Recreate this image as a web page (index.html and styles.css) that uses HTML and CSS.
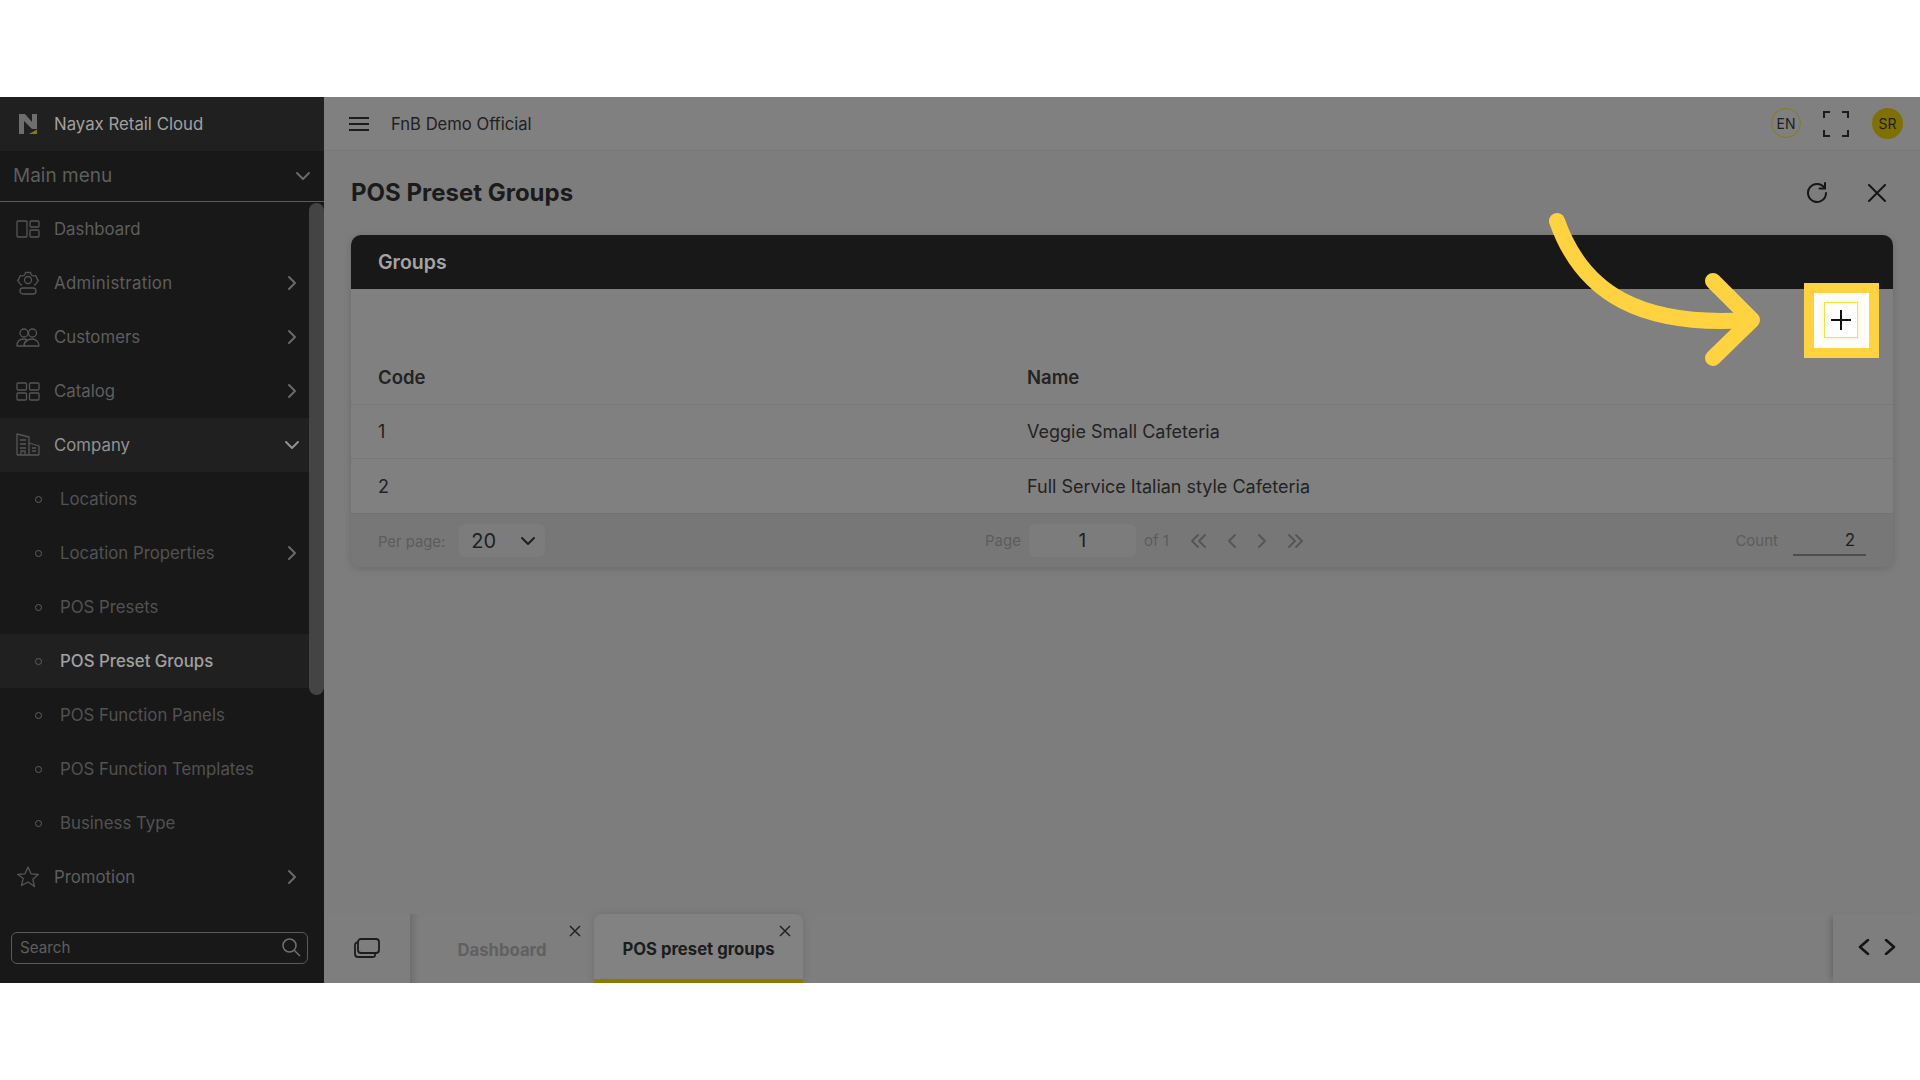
FILE: index.html
```html
<!DOCTYPE html>
<html lang="en">
<head>
<meta charset="utf-8">
<title>POS Preset Groups</title>
<link rel="stylesheet" href="styles.css">
</head>
<body>
<div class="app">
  <aside class="sidebar">
    <div class="brand">
      <svg class="logo" viewBox="0 0 20 22" width="20" height="22"><path d="M1 1h6l7 8V1h5v15h-5L6 8v13H1z" fill="#6e6e6e"/><path d="M11 21l8-4.500V21z" fill="#8a7a10"/></svg>
      <span>Nayax Retail Cloud</span>
    </div>
    <div class="mainmenu">
      <span>Main menu</span>
      <svg class="chev" viewBox="0 0 16 16" width="16" height="16"><path d="M2 5l6 6 6-6"/></svg>
    </div>
    <nav class="nav">
      <a class="item"><span class="ic"><svg viewBox="0 0 24 24" width="24" height="24"><rect x="1" y="4" width="10" height="16" rx="1"/><rect x="14" y="4" width="9" height="6" rx="1"/><rect x="14" y="13" width="9" height="7" rx="1"/></svg></span><span class="lbl">Dashboard</span></a>
      <a class="item"><span class="ic"><svg viewBox="0 0 24 24" width="24" height="24"><circle cx="12" cy="9" r="3.500"/><path d="M6 14C3 14 4 11 1.500 9.500 4 8 3 5 5 4.500c2 1 4 0 4.500-3h5c.5 3 2.500 4 4.500 3 2 .5 1 3.500 3.500 5C20 11 21 14 18 14"/><rect x="4" y="17" width="16" height="6" rx="3"/></svg></span><span class="lbl wide">Administration</span><svg class="chev r" viewBox="0 0 16 16" width="16" height="16"><path d="M5 2l6 6-6 6"/></svg></a>
      <a class="item"><span class="ic"><svg viewBox="0 0 24 24" width="24" height="24"><circle cx="8" cy="8" r="4"/><circle cx="16.500" cy="8" r="4"/><path d="M1 21c0-5 3-7 7-7 2 0 3 .5 3 1-2 1-3 3-3 6z"/><path d="M8 21c0-4 4-7 8-7s7 3 7 7z"/></svg></span><span class="lbl">Customers</span><svg class="chev r" viewBox="0 0 16 16" width="16" height="16"><path d="M5 2l6 6-6 6"/></svg></a>
      <a class="item"><span class="ic"><svg viewBox="0 0 24 24" width="24" height="24"><rect x="1" y="4" width="9.500" height="7" rx="1"/><rect x="13.500" y="4" width="9.500" height="7" rx="1"/><rect x="1" y="14" width="9.500" height="7" rx="1"/><rect x="13.500" y="14" width="9.500" height="7" rx="1"/></svg></span><span class="lbl">Catalog</span><svg class="chev r" viewBox="0 0 16 16" width="16" height="16"><path d="M5 2l6 6-6 6"/></svg></a>
      <a class="item open"><span class="ic"><svg viewBox="0 0 24 24" width="24" height="24"><path d="M1 22V1l12 3v18M13 10l10 3v9M1 22h22M4 7h6M4 11h6M4 15h6M5 22v-4h4v4M16 15h4M16 18h4"/></svg></span><span class="lbl">Company</span><svg class="chev r" viewBox="0 0 16 16" width="16" height="16"><path d="M2 5l6 6 6-6"/></svg></a>
      <a class="item sub"><span class="dot"></span><span class="lbl">Locations</span></a>
      <a class="item sub"><span class="dot"></span><span class="lbl">Location Properties</span><svg class="chev r" viewBox="0 0 16 16" width="16" height="16"><path d="M5 2l6 6-6 6"/></svg></a>
      <a class="item sub"><span class="dot"></span><span class="lbl">POS Presets</span></a>
      <a class="item sub active"><span class="dot"></span><span class="lbl">POS Preset Groups</span></a>
      <a class="item sub"><span class="dot"></span><span class="lbl">POS Function Panels</span></a>
      <a class="item sub"><span class="dot"></span><span class="lbl">POS Function Templates</span></a>
      <a class="item sub"><span class="dot"></span><span class="lbl">Business Type</span></a>
      <a class="item"><span class="ic"><svg viewBox="0 0 24 24" width="24" height="24"><path d="M12 2l3 6.800 7.300.7-5.500 4.800 1.700 7.200L12 17l-6.500 3.500 1.700-7.200L1.700 9.500 9 8.800z"/></svg></span><span class="lbl">Promotion</span><svg class="chev r" viewBox="0 0 16 16" width="16" height="16"><path d="M5 2l6 6-6 6"/></svg></a>
    </nav>
    <div class="search">
      <span>Search</span>
      <svg viewBox="0 0 20 20" width="20" height="20"><circle cx="8.500" cy="8.500" r="6.500"/><path d="M13.500 13.500L19 19"/></svg>
    </div>
    <div class="scrollthumb"></div>
  </aside>

  <div class="main">
    <header class="topbar">
      <svg class="burger" viewBox="0 0 20 14" width="20" height="14"><path d="M0 1h20M0 7h20M0 13h20"/></svg>
      <span class="org">FnB Demo Official</span>
      <div class="topright">
        <span class="lang">EN</span>
        <svg class="full" viewBox="0 0 26 26" width="26" height="26"><path d="M1 7V1h6M19 1h6v6M25 19v6h-6M7 25H1v-6"/></svg>
        <span class="avatar">SR</span>
      </div>
    </header>

    <section class="content">
      <div class="titlerow">
        <h1>POS Preset Groups</h1>
        <div class="titleicons">
          <svg viewBox="0 0 22 22" width="22" height="22"><path d="M18.500 6A9 9 0 1 0 20 11"/><path d="M19 1v5.500h-5.500"/></svg>
          <svg viewBox="0 0 18 18" width="18" height="18"><path d="M1 1l16 16M17 1L1 17"/></svg>
        </div>
      </div>
      <div class="card">
        <div class="cardhead">Groups</div>
        <div class="toolbar"></div>
        <div class="row thead"><div class="c1">Code</div><div>Name</div></div>
        <div class="row"><div class="c1">1</div><div>Veggie Small Cafeteria</div></div>
        <div class="row last"><div class="c1">2</div><div>Full Service Italian style Cafeteria</div></div>
        <div class="cardfoot">
          <div class="perpage">
            <span class="muted">Per page:</span>
            <span class="select"><span>20</span><svg viewBox="0 0 14 14" width="14" height="14"><path d="M1 4l6 6 6-6"/></svg></span>
          </div>
          <div class="pager">
            <span class="muted">Page</span>
            <span class="pageinput">1</span>
            <span class="muted">of 1</span>
            <span class="pagebtns">
              <svg viewBox="0 0 16 14" width="16" height="14"><path d="M7 1L1 7l6 6M14 1L8 7l6 6"/></svg>
              <svg viewBox="0 0 10 14" width="10" height="14"><path d="M8 1L2 7l6 6"/></svg>
              <svg viewBox="0 0 10 14" width="10" height="14"><path d="M2 1l6 6-6 6"/></svg>
              <svg viewBox="0 0 16 14" width="16" height="14"><path d="M2 1l6 6-6 6M9 1l6 6-6 6"/></svg>
            </span>
          </div>
          <div class="count">
            <span class="muted">Count</span>
            <span class="countval">2</span>
          </div>
        </div>
      </div>
    </section>

    <footer class="tabbar">
      <div class="tabicon"><svg viewBox="0 0 26 20" width="26" height="20"><rect x="4" y="1" width="21" height="14" rx="3"/><path d="M4 4.500H3.500A2.500 2.500 0 0 0 1 7v9a3 3 0 0 0 3 3h15a3 3 0 0 0 2-1v-3"/></svg></div>
      <div class="tab">Dashboard<svg class="tabx" viewBox="0 0 12 12" width="12" height="12"><path d="M1 1l10 10M11 1L1 11"/></svg></div>
      <div class="tab current">POS preset groups<svg class="tabx" viewBox="0 0 12 12" width="12" height="12"><path d="M1 1l10 10M11 1L1 11"/></svg></div>
      <div class="tabnav">
        <svg viewBox="0 0 12 16" width="12" height="16"><path d="M10 1L2 8l8 7"/></svg>
        <svg viewBox="0 0 12 16" width="12" height="16"><path d="M2 1l8 7-8 7"/></svg>
      </div>
    </footer>
  </div>

  <svg class="arrow" viewBox="0 0 220 170" width="220" height="170"><path d="M14 16C40 90 100 122 205 115"/><path d="M170 76l39 39-39 38"/></svg>
  <div class="highlight"><span class="plusbtn"><svg viewBox="0 0 20 20" width="20" height="20"><path d="M10 0v20M0 10h20"/></svg></span></div>
</div>
</body>
</html>
```

FILE: styles.css
```css
* { box-sizing: border-box; }
html, body { margin: 0; height: 100%; background: #fff; }
body { padding-top: 97px; font-family: "Inter", "Roboto", sans-serif; }
svg { fill: none; stroke: currentColor; display: block; flex: none; }

.app { position: relative; display: flex; height: 886px; width: 1920px; overflow: hidden; }

.sidebar { position: relative; width: 324px; flex: none; display: flex; flex-direction: column; background: #181818; color: #5e5e5e; font-size: 16.800px; }
.brand { height: 54px; display: flex; align-items: center; gap: 16px; padding-left: 18px; background: #202020; color: #a0a0a0; font-size: 16.800px; }
.logo { stroke: none; }
.mainmenu { height: 51px; display: flex; align-items: center; justify-content: space-between; padding: 0 13px 1px; border-bottom: 1px solid #5a5a5a; font-size: 19px; color: #5e5e5e; }
.chev { stroke-width: 2; stroke-linecap: round; stroke-linejoin: round; color: #6a6a6a; }

.nav { display: flex; flex-direction: column; }
.item { height: 54px; display: flex; align-items: center; padding-left: 16px; }
.ic { width: 24px; height: 24px; margin-right: 14px; color: #555; }
.ic svg { stroke-width: 1.300; stroke-linejoin: round; }
.lbl { flex: 1; }
.lbl.wide { letter-spacing: .3px; }
.chev.r { margin-right: 24px; }
.item.open { background: #202020; color: #929292; }
.item.open .chev { color: #929292; }
.sub { padding-left: 35px; }
.dot { width: 7px; height: 7px; border: 1.500px solid #5e5e5e; border-radius: 50%; margin-right: 18px; flex: none; }
.sub .lbl { color: #525252; }
.active { background: #202020; }
.sub.active .lbl { color: #a0a0a0; font-weight: 500; }

.search { margin: auto 16px 19px 11px; height: 32px; display: flex; align-items: center; justify-content: space-between; padding: 0 6px 2px 8px; border: 1px solid #5a5a5a; border-radius: 6px; font-size: 15.200px; color: #5e5e5e; }
.search svg { stroke-width: 1.500; color: #707070; }
.scrollthumb { position: absolute; right: 0; top: 106px; width: 15px; height: 492px; background: #444; border-radius: 8px; }

.main { flex: 1; min-width: 0; display: flex; flex-direction: column; background: #7d7d7d; color: #1b1b1b; }
.topbar { height: 54px; flex: none; display: flex; align-items: center; padding: 0 17px 0 25px; background: #808080; border-bottom: 1px solid #787878; }
.burger { stroke-width: 2; color: #1c1c1c; }
.org { margin-left: 22px; font-size: 16.600px; color: #202020; }
.topright { margin-left: auto; display: flex; align-items: center; }
.lang { width: 30px; height: 30px; border: 1px solid #8a7a10; border-radius: 50%; display: flex; align-items: center; justify-content: center; font-size: 14px; color: #1f1f1f; margin-bottom: 1px; }
.full { margin: 0 23px 0 22px; stroke-width: 2; color: #1c1c1c; }
.avatar { width: 31px; height: 31px; background: #807000; border-radius: 50%; display: flex; align-items: center; justify-content: center; font-size: 14px; color: #1f1f1f; margin-bottom: 1px; }

.content { flex: 1; padding: 0 27px; }
.titlerow { height: 84px; display: flex; align-items: center; justify-content: space-between; }
h1 { margin: 0 0 1px; font-size: 24px; font-weight: 700; color: #1b1b1b; }
.titleicons { display: flex; align-items: center; gap: 40px; padding-right: 7px; }
.titleicons svg { stroke-width: 2; stroke-linecap: round; color: #161616; }

.card { background: #808080; border-radius: 10px; box-shadow: 0 2px 8px rgba(0,0,0,.15); overflow: hidden; }
.cardhead { height: 54px; display: flex; align-items: center; padding-left: 27px; background: #181818; color: #a4a4a4; font-size: 19.500px; font-weight: 600; }
.toolbar { height: 62px; }
.row { height: 54px; display: flex; align-items: center; padding-left: 27px; border-bottom: 1px solid #777; font-size: 18px; color: #232323; }
.row.last { border-bottom: 0; }
.c1 { width: 649px; }
.thead { font-weight: 600; font-size: 18.500px; padding-bottom: 2px; }
.cardfoot { height: 54px; display: flex; align-items: center; padding: 0 27px; background: #777; border-top: 1px solid #727272; position: relative; }
.muted { font-size: 15px; color: #5c5c5c; }
.perpage { display: flex; align-items: center; gap: 14px; width: 606px; }
.perpage .muted { padding-top: 2px; font-size: 14.800px; }
.select { width: 86px; height: 33px; border-radius: 6px; background: #7c7c7c; display: flex; align-items: center; justify-content: space-between; padding: 0 10px 0 12px; font-size: 20px; color: #1f1f1f; }
.select svg { stroke-width: 2; stroke-linecap: round; stroke-linejoin: round; }
.pager { display: flex; align-items: center; margin-left: 1px; }
.pageinput { width: 107px; height: 33px; margin: 0 8px; border-radius: 6px; background: #7c7c7c; display: flex; align-items: center; justify-content: center; font-size: 19px; color: #1f1f1f; }
.pagebtns { display: flex; align-items: center; gap: 20px; margin-left: 22px; color: #555; }
.pagebtns svg { stroke-width: 1.800; stroke-linecap: round; stroke-linejoin: round; }
.count { margin-left: auto; display: flex; align-items: center; gap: 15px; }
.countval { width: 73px; height: 31px; border-bottom: 2px solid #4d4d4d; display: flex; align-items: center; justify-content: flex-end; padding: 0 11px 0 0; font-size: 17px; color: #1f1f1f; }

.tabbar { height: 69px; flex: none; display: flex; align-items: stretch; background: #7e7e7e; }
.tabicon { width: 86px; display: flex; align-items: center; justify-content: center; color: #1c1c1c; padding-bottom: 2px; }
.tabicon svg { stroke-width: 1.800; }
.tab { position: relative; width: 184px; display: flex; align-items: center; justify-content: center; font-size: 16.700px; font-weight: 700; color: #606060; box-shadow: inset 8px 0 8px -6px rgba(0,0,0,.18); padding-top: 3px; }
.tab.current { width: 209px; color: #1c1c1c; background: #828282; border-radius: 8px 8px 0 0; border-bottom: 4px solid #8a7a00; box-shadow: 0 0 8px rgba(0,0,0,.12); padding-top: 5px; }
.tabx { position: absolute; top: 11px; right: 13px; stroke-width: 1.500; color: #232323; }
.tab.current .tabx { right: 12px; }
.tabnav { margin-left: auto; width: 87px; display: flex; align-items: center; justify-content: center; gap: 14px; color: #141414; box-shadow: -5px 0 6px -3px rgba(0,0,0,.2); padding-bottom: 3px; }
.tabnav svg { stroke-width: 2.500; stroke-linecap: round; stroke-linejoin: round; }

.arrow { position: absolute; left: 1543px; top: 108px; color: #ffd23f; stroke-width: 16; stroke-linecap: round; stroke-linejoin: round; }
.highlight { position: absolute; left: 1804px; top: 186px; width: 75px; height: 75px; border: 10px solid #ffd23f; background: #fff; display: flex; align-items: center; justify-content: center; }
.plusbtn { width: 34px; height: 36px; border: 1px solid #f2e33a; box-shadow: 0 0 5px rgba(240,230,80,.5); display: flex; align-items: center; justify-content: center; color: #111; margin-right: 1px; margin-bottom: 2px; }
.plusbtn svg { stroke-width: 2; }
```
